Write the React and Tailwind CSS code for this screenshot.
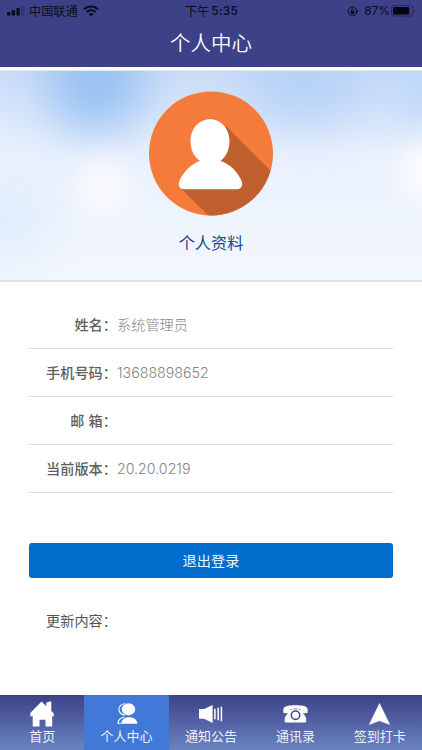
const DARK = "#3d4187";

function SignalIcon() {
  return (
    <svg width="19" height="10" viewBox="0 0 19 10" className="shrink-0">
      <rect x="0" y="6" width="3.4" height="3.6" rx="0.8" fill="#0a0b1c" />
      <rect x="4.6" y="4.3" width="3.4" height="5.3" rx="0.8" fill="#0a0b1c" />
      <rect x="9.4" y="2" width="3.4" height="7.6" rx="0.8" fill="#0a0b1c" />
      <rect x="14" y="0" width="3.4" height="9.6" rx="0.8" fill="#31346f" />
    </svg>
  );
}

function WifiIcon() {
  return (
    <svg width="16" height="12" viewBox="0 0 16 12" className="shrink-0">
      <path d="M1 4.2a10.4 10.4 0 0 1 14 0" fill="none" stroke="#0a0b1c" strokeWidth="2.2" />
      <path d="M3.6 7a6.6 6.6 0 0 1 8.8 0" fill="none" stroke="#0a0b1c" strokeWidth="2" />
      <path d="M8 11.4 5.7 9.1a3.3 3.3 0 0 1 4.6 0Z" fill="#0a0b1c" />
    </svg>
  );
}

function LockIcon() {
  return (
    <svg width="12" height="11" viewBox="0 0 12 11" className="shrink-0">
      <circle cx="5.4" cy="5.4" r="4.4" fill="none" stroke="#0a0b1c" strokeWidth="1" />
      <path d="m8.400 4.800 2.800 0-1.400 2Z" fill="#0a0b1c" />
      <rect x="3.4" y="4.9" width="4" height="3.1" rx="0.4" fill="#0a0b1c" />
      <path d="M4.200 5V4a1.200 1.200 0 0 1 2.400 0v1" fill="none" stroke="#0a0b1c" strokeWidth="0.8" />
    </svg>
  );
}

function BatteryIcon() {
  return (
    <svg width="25" height="12" viewBox="0 0 25 12" className="shrink-0">
      <rect x="0.5" y="0.5" width="21.5" height="10.6" rx="2.8" fill="none" stroke="#25285a" />
      <rect x="2" y="2" width="16.3" height="7.6" rx="1.4" fill="#05060f" />
      <path d="M23.200 4v3.600c1.300-.5 1.300-3.100 0-3.600Z" fill="#25285a" />
    </svg>
  );
}

function Avatar() {
  return (
    <svg width="124" height="125" viewBox="0 0 124 125" className="relative block">
      <defs>
        <clipPath id="disc">
          <circle cx="62" cy="62.4" r="62" />
        </clipPath>
      </defs>
      <circle cx="62" cy="62.4" r="62" fill="#f57b3c" />
      <path d="M77 35 150 108V160H95L31 96.500 60 60Z" fill="#c1602f" clipPath="url(#disc)" />
      <path
        d="M61 28.200c11 0 19.500 9.500 19.500 22 0 8.500-3.500 15.500-9 19.800 9.500 3 17.500 11 21.300 20.500 1.500 4.200-.8 7.700-4.300 7.700H34.500c-3.500 0-5.800-3.500-4.300-7.700C34 81 42 73 51 70c-6-4.300-9.500-11.300-9.500-19.800 0-12.500 8.500-22 19.500-22Z"
        fill="#fff"
      />
    </svg>
  );
}

function HomeIcon() {
  return (
    <svg width="24" height="26" viewBox="0 0 24 26" fill="#fff">
      <path d="M11.500.6 16.300 5.200V1.500L21.300.2v9.700L23.800 12.500v2.700h-1.600V25.500h-6.700v-6.700H9.500v6.700H2.700V15.200H.3v-3.200Z" />
    </svg>
  );
}

function PersonIcon() {
  return (
    <svg width="21" height="22" viewBox="0 0 21 22" className="ml-px">
      <path d="M8.200.8C4.600.8 1.900 3 1.900 6.200s2.600 5.700 6.200 5.800" fill="none" stroke="#fff" strokeWidth="1.100" />
      <ellipse cx="11.500" cy="6.300" rx="6.700" ry="6.100" fill="#fff" />
      <path d="M7.500 14C3.500 14.800 1.200 16.800.9 20.200h3" fill="none" stroke="#fff" strokeWidth="1.100" />
      <path d="M4.200 20.800c.2-4 3.200-6.600 8-6.600s8 2.600 8.200 6.600Z" fill="#fff" />
    </svg>
  );
}

function SpeakerIcon() {
  return (
    <svg width="24" height="18" viewBox="0 0 24 18">
      <path d="M0 4h5.200L13.600 0v18l-8.400-4.200H0Z" fill="#fff" />
      <path d="M15.900 3.700v10.600M19.200 2.700v12.600M22.400 1.700v14.600" stroke="#fff" strokeWidth="1.500" />
    </svg>
  );
}

function PhoneIcon() {
  return (
    <svg width="25" height="18" viewBox="0 0 25 18">
      <path
        d="M5 .8C7 0 18 0 20 .8c2.700.4 4.400 1.700 4.600 3.700v3.200c-1.500.6-3.300.5-4.300.2 0 1.800 2.900 2.800 2.900 6.100v2c0 1-.5 1.600-1.500 1.600H3.200c-1 0-1.500-.6-1.500-1.600v-2c0-3.300 2.900-4.300 2.900-6.100-1 .3-2.800.4-4.300-.2V4.500C.5 2.500 2.300 1.200 5 .8Z"
        fill="#fff"
      />
      <circle cx="12.500" cy="10.200" r="4.200" fill="none" stroke="#484d93" strokeWidth="1.600" />
      <path d="M7.600 4.400h1.600M10.600 3.900h3.800M15.800 4.400h1.600" stroke="#7f83b8" strokeWidth="1" />
    </svg>
  );
}

function ArrowIcon() {
  return (
    <svg width="21" height="22" viewBox="0 0 21 22">
      <path d="M10.500.4 20.700 21.500 10.500 17.800.3 21.500Z" fill="#fff" stroke="#fff" strokeWidth="0.5" strokeLinejoin="round" />
    </svg>
  );
}

const fields = [
  { label: "姓名：", value: "系统管理员" },
  { label: "手机号码：", value: "13688898652" },
  { label: "邮 箱：", value: "" },
  { label: "当前版本：", value: "20.20.0219" },
];

const tabs = [
  { label: "首页", icon: <HomeIcon />, pad: "pt-[6px]" },
  { label: "个人中心", icon: <PersonIcon />, pad: "pt-[8px]", active: true },
  { label: "通知公告", icon: <SpeakerIcon />, pad: "pt-[10px]" },
  { label: "通讯录", icon: <PhoneIcon />, pad: "pt-[10px]" },
  { label: "签到打卡", icon: <ArrowIcon />, pad: "pt-[8px]" },
];

function StatusBar() {
  return (
    <div className="grid h-[22px] grid-cols-[1fr_auto_1fr] items-center pl-[7px] pr-[6px] text-[12.2px] leading-[22px] text-[#0a0b1c]">
      <div className="flex items-center">
        <SignalIcon />
        <span className="ml-[3px] mr-[5px]">中国联通</span>
        <WifiIcon />
      </div>
      <div className="flex items-center">
        <span>下午</span>
        <span className="ml-[2px] font-['Inter'] text-[12px] font-medium tracking-[0.2px]">5:35</span>
      </div>
      <div className="flex items-center justify-end">
        <LockIcon />
        <span className="ml-[5px] mr-px font-['Inter'] text-[12px] tracking-[-0.1px]">87%</span>
        <BatteryIcon />
      </div>
    </div>
  );
}

// soft out-of-focus sky behind the avatar
function Sky() {
  return (
    <div className="absolute inset-0 overflow-hidden bg-linear-to-b from-[#c9dcf8] via-[#eaf1fd] via-40% to-[#f3f7fe]">
      <div className="absolute -top-[40px] left-[48px] h-[100px] w-[95px] rounded-full bg-[#94bff3] blur-[25px]" />
      <div className="absolute -top-[35px] left-[245px] h-[85px] w-[120px] rounded-full bg-[#b4d1f7] blur-[25px]" />
      <div className="absolute -top-[15px] left-[385px] h-[60px] w-[80px] rounded-full bg-[#bdd7f8] blur-[22px]" />
      <div className="absolute top-[88px] left-[75px] h-[55px] w-[55px] rounded-full bg-[#fafbfd] blur-[15px]" />
      <div className="absolute top-[75px] left-[402px] h-[55px] w-[50px] rounded-full bg-[#fdfdfe] blur-[14px]" />
      <div className="absolute top-[110px] -left-[40px] h-[75px] w-[90px] rounded-full bg-[#e0ecfb] blur-[22px]" />
    </div>
  );
}

function TabBar() {
  return (
    <nav className="grid h-[55px] shrink-0 grid-cols-5 bg-linear-to-b from-[#3d4289] to-[#6a83c0]">
      {tabs.map((t) => (
        <div key={t.label} className={t.active ? "flex flex-col items-center bg-[#4279d8]" : "flex flex-col items-center"}>
          <div className={`flex h-[31px] items-start ${t.pad}`}>{t.icon}</div>
          <span className="text-[13px] leading-[20px] text-[#eef1fb]">{t.label}</span>
        </div>
      ))}
    </nav>
  );
}

export default function App() {
  return (
    <div className="flex h-[750px] w-[422px] flex-col overflow-hidden bg-white font-['Noto_Sans_CJK_SC',sans-serif]">
      <header className="h-[67px] shrink-0" style={{ backgroundColor: DARK }}>
        <StatusBar />
        <h1 className="text-center text-[20.5px] leading-[40px] font-[350] text-white">个人中心</h1>
      </header>

      <section className="relative mt-[3px] flex h-[212px] shrink-0 flex-col items-center border-t border-b-2 border-t-[#e4e8ea] border-b-[#e0e1e5] pt-[20px]">
        <Sky />
        <Avatar />
        <p className="relative mt-[14px] text-[16.2px] leading-[24px] text-[#1d478b]">个人资料</p>
      </section>

      <main className="flex-1 px-[29px] pt-[19px]">
        {fields.map((f) => (
          <div key={f.label} className="flex h-[48px] items-center border-b border-[#dedede] text-[14.2px]">
            <span className="w-[88px] shrink-0 text-right font-medium whitespace-nowrap text-[#606060] [word-spacing:1px]">{f.label}</span>
            <span className="font-['Inter','Noto_Sans_CJK_SC',sans-serif] font-light text-[#858585]">{f.value}</span>
          </div>
        ))}

        <button className="mt-[50px] block h-[35px] w-full rounded-[3px] bg-[#006dcc] text-[14.2px] text-[#eef6fd]">
          退出登录
        </button>

        <p className="mt-[32px] w-[88px] text-right text-[14.2px] leading-[21px] text-[#555]">更新内容：</p>
      </main>

      <TabBar />
    </div>
  );
}
